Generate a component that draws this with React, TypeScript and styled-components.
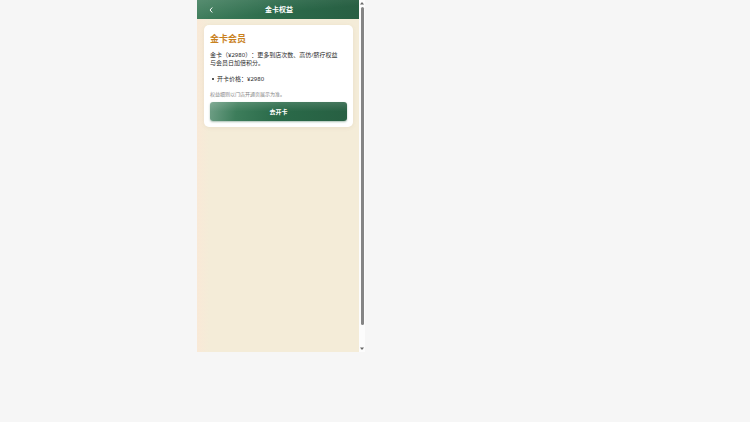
import React from "react";
import styled, { createGlobalStyle } from "styled-components";

const GlobalStyle = createGlobalStyle`
  * { box-sizing: border-box; }
  html { background: #f6f6f6; }
  body {
    margin: 0;
    color: #2b2b2b;
    font-family: "Noto Sans", "Noto Sans CJK SC", sans-serif;
    font-size: 6px;
    line-height: 8px;
    text-spacing-trim: space-all;
  }
`;

const Stage = styled.div`
  display: grid;
  grid-template-columns: 197fr 168fr 385fr;
  grid-template-rows: 352fr 70fr;
  min-height: 100vh;
`;

const Device = styled.div`
  grid-column: 2;
  display: flex;
  min-width: 0;
`;

const Screen = styled.div`
  flex: 1;
  min-width: 0;
  background: linear-gradient(90deg, #f9e9d7 0, #f4ecd8 12px);
`;

const Header = styled.header`
  display: grid;
  grid-template-columns: 28px 1fr 26px;
  align-items: center;
  height: 19px;
  background: linear-gradient(175deg, rgba(255, 255, 255, 0.12), transparent 60%),
    linear-gradient(90deg, #3f7d5c, #2b6a4a 50%, #285f43);
  color: #ffffff;
`;

const BackButton = styled.button`
  display: flex;
  justify-content: center;
  align-items: center;
  height: 19px;
  padding: 0;
  border: 0;
  background: none;
  color: inherit;
`;

const HeaderTitle = styled.h1`
  margin: 0;
  font-size: 7px;
  line-height: 12px;
  font-weight: 700;
  text-align: center;
`;

const Card = styled.main`
  margin: 6px 6px 6px 7px;
  padding: 7px 6px 6px;
  border-radius: 5px;
  background: #ffffff;
  box-shadow: 0 1px 4px rgba(120, 90, 40, 0.08);
`;

const CardTitle = styled.h2`
  margin: 0 0 5px;
  color: #c9821f;
  font-size: 9px;
  line-height: 14px;
  font-weight: 700;
`;

const Description = styled.p`
  margin: 0 0 8px;
  padding-right: 6px;
`;

const Benefits = styled.ul`
  margin: 0 0 7px;
  padding-left: 7px;
  list-style: none;
`;

const Benefit = styled.li`
  &::before {
    content: "";
    float: left;
    width: 2px;
    height: 2px;
    margin: 3px 0 0 -5px;
    border-radius: 50%;
    background: #222222;
  }
`;

const Note = styled.p`
  margin: 0 0 4px;
  color: #858585;
  font-size: 5px;
`;

const PrimaryButton = styled.button`
  display: block;
  width: 100%;
  height: 19px;
  padding: 0;
  border: 0;
  border-radius: 3px;
  background: linear-gradient(180deg, rgba(255, 255, 255, 0.14), transparent 50%),
    linear-gradient(100deg, #6f9f86, #3d7d5b 20%, #2a6a49 50%, #275f42);
  box-shadow: 0 1px 2px rgba(40, 95, 66, 0.4);
  color: #ffffff;
  font-family: inherit;
  font-size: 6px;
  font-weight: 700;
`;

const ScrollRail = styled.div`
  display: flex;
  flex-direction: column;
  align-items: center;
  justify-content: space-between;
  width: 6px;
  padding: 1px 0;
  background: #fcfcfc;
`;

const ScrollThumb = styled.div`
  flex: 1;
  width: 3px;
  margin: 2px 0 22px;
  border-radius: 2px;
  background: #858585;
`;

export default function App() {
  return (
    <>
      <GlobalStyle />
      <Stage lang="zh-CN">
        <Device>
          <Screen>
            <Header>
              <BackButton type="button" aria-label="返回">
                <svg width="4" height="6" viewBox="0 0 4 6" fill="none" stroke="currentColor" strokeLinecap="round">
                  <path d="M3 0.8 1 3l2 2.2" />
                </svg>
              </BackButton>
              <HeaderTitle>金卡权益</HeaderTitle>
            </Header>
            <Card>
              <CardTitle>金卡会员</CardTitle>
              <Description>金卡（¥2980）：更多到店次数、高仿/脐疗权益与会员日加倍积分。</Description>
              <Benefits>
                <Benefit>开卡价格：¥2980</Benefit>
              </Benefits>
              <Note>权益细则以门店开通页展示为准。</Note>
              <PrimaryButton type="button">去开卡</PrimaryButton>
            </Card>
          </Screen>
          <ScrollRail aria-hidden="true">
            <svg width="4" height="4" viewBox="0 0 4 4">
              <path d="M0 3.5 2 1l2 2.5z" fill="#666666" />
            </svg>
            <ScrollThumb />
            <svg width="4" height="4" viewBox="0 0 4 4">
              <path d="M0 .5 2 3 4 .5z" fill="#666666" />
            </svg>
          </ScrollRail>
        </Device>
      </Stage>
    </>
  );
}
